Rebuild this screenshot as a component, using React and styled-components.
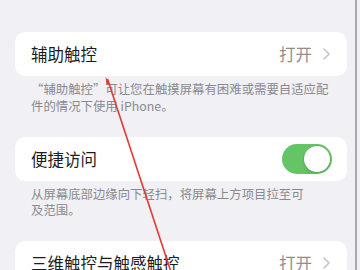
import styled, { createGlobalStyle } from 'styled-components';

const GlobalStyle = createGlobalStyle`
    html, body {
        margin: 0;
        padding: 0;
        background: #f0f0f5;
    }
    body {
        font-family: "Noto Sans CJK SC", "Noto Sans", sans-serif;
        -webkit-font-smoothing: antialiased;
    }
`

const Page = styled.div`
    position: relative;
    width: 360px;
    height: 270px;
    overflow: hidden;
    display: flex;
    background: #f0f0f5;
`

const Content = styled.div`
    width: 355px;
    padding: 32px 0 0 15px;
    box-sizing: border-box;
`

const ScrollEdge = styled.div`
    width: 2px;
    height: 100%;
    background: #a9a9ad;
`

const Card = styled.div`
    width: 332px;
    height: 44px;
    background: #ffffff;
    border-radius: 10px;
    display: flex;
    align-items: center;
    justify-content: space-between;
    padding: 0 16px;
    box-sizing: border-box;
    margin-bottom: ${(p) => (p.$last ? '0' : '0')};
`

const Label = styled.span`
    font-size: 16.5px;
    color: #1c1c1e;
    letter-spacing: 0;
`

const Detail = styled.div`
    display: flex;
    align-items: center;
    gap: 11px;
    color: #8e8e93;
    font-size: 16.5px;
    padding-right: 1px;
`

const Footer = styled.p`
    margin: 5px 0 22px;
    padding: 0 16px;
    font-size: 12.4px;
    line-height: 16.8px;
    color: #8a8a8e;
    white-space: nowrap;
`

const Toggle = styled.div`
    width: 50px;
    height: 30px;
    border-radius: 15px;
    background: ${(p) => (p.$on ? '#65c466' : '#e9e9eb')};
    display: flex;
    align-items: center;
    justify-content: ${(p) => (p.$on ? 'flex-end' : 'flex-start')};
    padding: 2px;
    box-sizing: border-box;
    margin-right: -1px;

    > span {
        width: 26px;
        height: 26px;
        border-radius: 50%;
        background: #fff;
        box-shadow: 0 0 0 0.5px rgba(0, 0, 0, 0.12), 0 2px 4px rgba(0, 0, 0, 0.12);
    }
`

const Arrow = styled.svg`
    position: absolute;
    left: 0;
    top: 0;
    pointer-events: none;
`

const Chevron = () => (
    <svg width="7" height="12" viewBox="0 0 7 12">
        <path d="M1 1l5 5-5 5" fill="none" stroke="#c4c4c7" strokeWidth="1.6" strokeLinecap="round" strokeLinejoin="round" />
    </svg>
)

const App = () => {
    return (
        <Page>
            <GlobalStyle />
            <Content>
                <Card>
                    <Label>辅助触控</Label>
                    <Detail>打开<Chevron /></Detail>
                </Card>
                <Footer>
                    “辅助触控”可让您在触摸屏幕有困难或需要自适应配<br />
                    件的情况下使用 iPhone。
                </Footer>

                <Card>
                    <Label>便捷访问</Label>
                    <Toggle $on><span /></Toggle>
                </Card>
                <Footer>
                    从屏幕底部边缘向下轻扫，将屏幕上方项目拉至可<br />
                    及范围。
                </Footer>

                <Card>
                    <Label>三维触控与触感触控</Label>
                    <Detail>打开<Chevron /></Detail>
                </Card>
            </Content>
            <ScrollEdge />
            <Arrow width="360" height="270" viewBox="0 0 360 270">
                <line x1="107.5" y1="79" x2="171" y2="272" stroke="#e23a30" strokeWidth="1.6" />
                <path d="M105.6 77 L109.8 83.5 L106.4 84.6 Z" fill="#e23a30" />
            </Arrow>
        </Page>
    )
}

export default App;
